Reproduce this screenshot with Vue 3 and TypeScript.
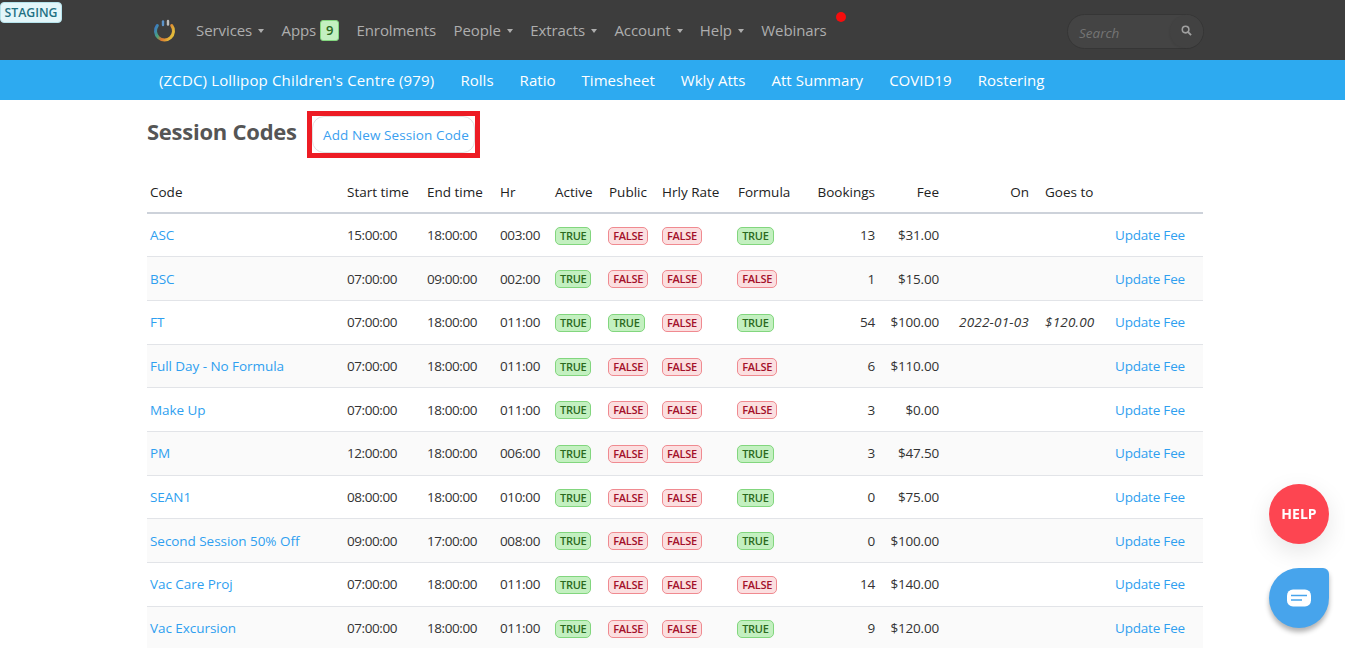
<script setup lang="ts">
interface Row { code: string; start: string; end: string; hr: string; active: boolean; pub: boolean; hrly: boolean; formula: boolean; bookings: number; fee: string; on?: string; goes?: string }
const rows: Row[] = [
  { code: 'ASC', start: '15:00:00', end: '18:00:00', hr: '003:00', active: true, pub: false, hrly: false, formula: true, bookings: 13, fee: '$31.00' },
  { code: 'BSC', start: '07:00:00', end: '09:00:00', hr: '002:00', active: true, pub: false, hrly: false, formula: false, bookings: 1, fee: '$15.00' },
  { code: 'FT', start: '07:00:00', end: '18:00:00', hr: '011:00', active: true, pub: true, hrly: false, formula: true, bookings: 54, fee: '$100.00', on: '2022-01-03', goes: '$120.00' },
  { code: 'Full Day - No Formula', start: '07:00:00', end: '18:00:00', hr: '011:00', active: true, pub: false, hrly: false, formula: false, bookings: 6, fee: '$110.00' },
  { code: 'Make Up', start: '07:00:00', end: '18:00:00', hr: '011:00', active: true, pub: false, hrly: false, formula: false, bookings: 3, fee: '$0.00' },
  { code: 'PM', start: '12:00:00', end: '18:00:00', hr: '006:00', active: true, pub: false, hrly: false, formula: true, bookings: 3, fee: '$47.50' },
  { code: 'SEAN1', start: '08:00:00', end: '18:00:00', hr: '010:00', active: true, pub: false, hrly: false, formula: true, bookings: 0, fee: '$75.00' },
  { code: 'Second Session 50% Off', start: '09:00:00', end: '17:00:00', hr: '008:00', active: true, pub: false, hrly: false, formula: true, bookings: 0, fee: '$100.00' },
  { code: 'Vac Care Proj', start: '07:00:00', end: '18:00:00', hr: '011:00', active: true, pub: false, hrly: false, formula: false, bookings: 14, fee: '$140.00' },
  { code: 'Vac Excursion', start: '07:00:00', end: '18:00:00', hr: '011:00', active: true, pub: false, hrly: false, formula: true, bookings: 9, fee: '$120.00' },
]
const mainNav = [
  { label: 'Services', caret: true }, { label: 'Apps', badge: '9' }, { label: 'Enrolments' },
  { label: 'People', caret: true }, { label: 'Extracts', caret: true }, { label: 'Account', caret: true },
  { label: 'Help', caret: true }, { label: 'Webinars', dot: true },
]
const subNav = ["(ZCDC) Lollipop Children's Centre (979)", 'Rolls', 'Ratio', 'Timesheet', 'Wkly Atts', 'Att Summary', 'COVID19', 'Rostering']
</script>

<template>
  <div class="page">
    <span class="staging">STAGING</span>
    <header class="topbar">
      <svg class="logo" width="24" height="26" viewBox="0 0 24 26" fill="none">
        <defs>
          <linearGradient id="ring" x1="0" y1="0" x2="1" y2="0.4">
            <stop offset="0" stop-color="#3b78c9" />
            <stop offset="0.35" stop-color="#4aa57a" />
            <stop offset="0.6" stop-color="#d8742e" />
            <stop offset="1" stop-color="#e3b93a" />
          </linearGradient>
        </defs>
        <path d="M4.3 7.5 A9 9 0 1 0 18.7 7.5" stroke="url(#ring)" stroke-width="3" stroke-linecap="round" />
        <path d="M10 3.5v3.5" stroke="#5d93c9" stroke-width="2.4" stroke-linecap="round" />
        <path d="M15 3v3.5" stroke="#bdbdbd" stroke-width="2.4" stroke-linecap="round" />
      </svg>
      <nav class="mainnav">
        <a v-for="n in mainNav" :key="n.label" class="mainlink">
          <span>{{ n.label }}</span>
          <i v-if="n.caret" class="caret"></i>
          <b v-if="n.badge" class="count">{{ n.badge }}</b>
          <i v-if="n.dot" class="dot"></i>
        </a>
      </nav>
      <div class="search">
        <span class="placeholder">Search</span>
        <span class="searchbtn">
          <svg width="11" height="11" viewBox="0 0 12 12" fill="none" stroke="#a0a0a0">
            <circle cx="5" cy="5" r="3.6" stroke-width="1.7" />
            <path d="M7.8 7.8 11 11" stroke-width="2" />
          </svg>
        </span>
      </div>
    </header>
    <nav class="subbar">
      <a v-for="s in subNav" :key="s">{{ s }}</a>
    </nav>
    <main class="content">
      <div class="titlerow">
        <h1>Session Codes</h1>
        <div class="highlight"><button class="addbtn">Add New Session Code</button></div>
      </div>
      <table>
        <thead>
          <tr>
            <th>Code</th><th>Start time</th><th>End time</th><th>Hr</th><th>Active</th><th>Public</th><th>Hrly Rate</th><th>Formula</th>
            <th class="r">Bookings</th><th class="r">Fee</th><th class="r">On</th><th>Goes to</th><th></th>
          </tr>
        </thead>
        <tbody>
          <tr v-for="row in rows" :key="row.code">
            <td><a>{{ row.code }}</a></td>
            <td>{{ row.start }}</td>
            <td>{{ row.end }}</td>
            <td>{{ row.hr }}</td>
            <td v-for="(v, i) in [row.active, row.pub, row.hrly, row.formula]" :key="i">
              <span class="tag" :class="v ? 'yes' : 'no'">{{ v ? 'TRUE' : 'FALSE' }}</span>
            </td>
            <td class="r">{{ row.bookings }}</td>
            <td class="r">{{ row.fee }}</td>
            <td class="r em">{{ row.on }}</td>
            <td class="em">{{ row.goes }}</td>
            <td><a>Update Fee</a></td>
          </tr>
        </tbody>
      </table>
    </main>
    <button class="help">HELP</button>
    <button class="chat">
      <svg width="24" height="18" viewBox="0 0 24 18">
        <rect width="24" height="17" y="0.5" rx="6" fill="#fff" />
        <path d="M4 6.5h16M4 11h11" stroke="#47a4ec" stroke-width="1.6" />
      </svg>
    </button>
  </div>
</template>

<style>
html, body { margin: 0; overflow: hidden; background: #fff; }
</style>

<style scoped>
.page {
  font-family: "Open Sans", "Noto Sans", sans-serif;
  color: #333;
  height: 648px;
  overflow: hidden;
  position: relative;
}
.staging {
  position: absolute;
  left: 0;
  top: 2px;
  width: 62px;
  height: 21px;
  box-sizing: border-box;
  background: #e3f6fa;
  border: 1px solid #b5e3ec;
  border-radius: 4px;
  color: #1f7183;
  font-size: 12.3px;
  font-weight: 600;
  line-height: 19px;
  text-align: center;
}
.topbar {
  height: 60px;
  background: #3d3d3d;
  display: flex;
  align-items: center;
  padding-left: 153px;
  box-sizing: border-box;
}
.logo { margin-right: 19px; flex: none; margin-top: 2px; }
.mainnav { display: flex; gap: 17.3px; }
.mainlink {
  color: #aeaeae;
  font-size: 15px;
  letter-spacing: -0.08px;
  display: flex;
  align-items: center;
  position: relative;
  white-space: nowrap;
}
.caret {
  width: 0; height: 0;
  border-left: 3.5px solid transparent;
  border-right: 3.5px solid transparent;
  border-top: 4px solid #aeaeae;
  margin-left: 6px;
  margin-top: 2px;
}
.count {
  background: #c3f0c0;
  border: 1px solid #82d67e;
  color: #2b6a1e;
  font-size: 13px;
  font-weight: 600;
  border-radius: 3px;
  width: 19px;
  height: 21px;
  box-sizing: border-box;
  text-align: center;
  line-height: 19px;
  margin-left: 4px;
  letter-spacing: 0;
}
.dot {
  position: absolute;
  left: 75px;
  top: -8px;
  width: 10px;
  height: 10px;
  background: #f60d0d;
  border-radius: 50%;
}
.search {
  position: absolute;
  left: 1067px;
  top: 14px;
  width: 137px;
  height: 35px;
  box-sizing: border-box;
  border-radius: 18px;
  background: #444;
  border: 1px solid #363636;
  display: flex;
  align-items: center;
  justify-content: space-between;
  padding-left: 11px;
}
.placeholder { color: #747474; font-size: 13.5px; font-style: italic; padding-top: 2px; }
.searchbtn {
  width: 33px;
  height: 33px;
  border-radius: 50%;
  background: #424242;
  box-shadow: -1px 1px 2px rgba(0,0,0,.06);
  display: flex;
  align-items: center;
  justify-content: center;
  padding-bottom: 2px;
  box-sizing: border-box;
}
.subbar {
  height: 40px;
  background: #2daaf0;
  display: flex;
  align-items: center;
  padding-left: 159px;
  gap: 26px;
  color: #fff;
  font-size: 15px;
  letter-spacing: 0.04px;
  box-sizing: border-box;
}
.subbar a:first-child { letter-spacing: 0.15px; }
.content { width: 1056px; margin-left: 147px; }
.titlerow {
  display: flex;
  align-items: flex-start;
  height: 75.3px;
  box-sizing: border-box;
  padding-top: 11px;
}
h1 {
  flex: none;
  width: 160px;
  margin: 5px 0 0;
  font-size: 22px;
  line-height: 30px;
  font-weight: 700;
  color: #555;
  letter-spacing: -0.25px;
  white-space: nowrap;
}
.highlight {
  border: 5px solid #ed1c24;
  height: 47px;
  box-sizing: border-box;
  width: 173px;
}
.addbtn {
  display: block;
  width: 100%;
  height: 100%;
  background: #fff;
  border: 1px solid #e0e0e0;
  border-radius: 12px;
  color: #3a9ff0;
  font: inherit;
  font-size: 13.5px;
  padding: 0 0 0 10px;
  text-align: left;
  letter-spacing: 0.1px;
  white-space: nowrap;
}
table {
  width: 1056px;
  table-layout: fixed;
  border-collapse: collapse;
  font-size: 13.5px;
  letter-spacing: -0.2px;
}
th {
  font-weight: 500;
  text-align: left;
  color: #222;
  height: 38px;
  padding: 0 0 4px 3.5px;
  border-bottom: 2px solid #cdd2da;
  box-sizing: border-box;
  white-space: nowrap;
  letter-spacing: 0;
}
td {
  padding: 0 0 0 3.5px;
  height: 43.66px;
  border-bottom: 1px solid #e2e4e8;
  white-space: nowrap;
  box-sizing: border-box;
}
th:first-child, td:first-child { padding-left: 3px; }
td:first-child { letter-spacing: -0.05px; }
td:nth-child(2), td:nth-child(3) { letter-spacing: -0.42px; }
td:nth-child(4) { letter-spacing: -0.35px; }
th:nth-child(12), td:nth-child(12) { padding-left: 12.5px; }
th.r, td.r { text-align: right; padding: 0 3.5px 0 0; }
th.r { padding-bottom: 4px; }
td.em { font-style: italic; letter-spacing: 0.2px; }
th:nth-child(1) { width: 196.5px; }
th:nth-child(2) { width: 80px; }
th:nth-child(3) { width: 73px; }
th:nth-child(4) { width: 55px; }
th:nth-child(5) { width: 54px; }
th:nth-child(6) { width: 53px; }
th:nth-child(7) { width: 76px; }
th:nth-child(8) { width: 67px; }
th:nth-child(9) { width: 77px; }
th:nth-child(10) { width: 64px; }
th:nth-child(11) { width: 90px; }
th:nth-child(12) { width: 79px; }
tbody tr:nth-child(even) { background: #fafafa; }
td a { color: #2f9ff0; }
.tag {
  display: inline-block;
  font-size: 11px;
  font-weight: 600;
  line-height: 16px;
  height: 18px;
  padding: 0 4px;
  border-radius: 5px;
  box-sizing: border-box;
  border: 1px solid;
  vertical-align: middle;
  letter-spacing: -0.3px;
}
td:nth-child(6) .tag, td:nth-child(8) .tag { margin-left: -0.8px; }
.yes { background: #c3f0c0; border-color: #82d67e; color: #2b6a1e; }
.no { background: #fbdfe0; border-color: #f08a90; color: #a3102a; }
.help {
  position: fixed;
  left: 1269px;
  top: 484px;
  width: 60px;
  height: 60px;
  border-radius: 50%;
  border: 0;
  background: #fd4551;
  color: #fff;
  font: inherit;
  font-size: 14px;
  font-weight: 700;
  padding: 0 0 2px;
  box-shadow: 0 8px 24px rgba(0,0,0,.1);
}
.chat {
  position: fixed;
  left: 1269px;
  top: 568px;
  width: 60px;
  height: 60px;
  border: 0;
  padding: 0;
  border-radius: 30px 6px 30px 30px;
  background: #47a4ec;
  box-shadow: 0 4px 5px rgba(0,0,0,.3);
  display: flex;
  align-items: center;
  justify-content: center;
}
</style>
